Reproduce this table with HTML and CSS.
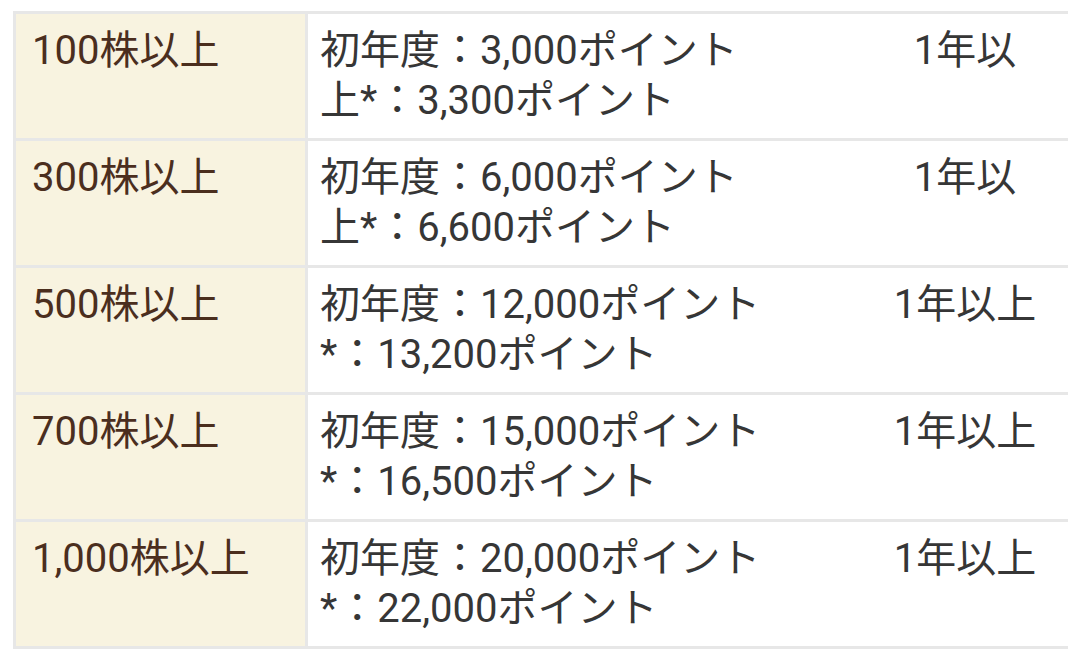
FILE: index.html
```html
<!DOCTYPE html>
<html lang="ja">
<head>
<meta charset="utf-8">
<link rel="stylesheet" href="styles.css">
</head>
<body>
<div class="wrap">
<table class="tbl">
  <tr>
    <th class="c1">100株以上</th>
    <td class="c2">初年度：3,000ポイント<br>上*：3,300ポイント</td>
    <td class="c3">1年以</td>
  </tr>
  <tr>
    <th class="c1">300株以上</th>
    <td class="c2">初年度：6,000ポイント<br>上*：6,600ポイント</td>
    <td class="c3">1年以</td>
  </tr>
  <tr>
    <th class="c1">500株以上</th>
    <td class="c2">初年度：12,000ポイント<br>*：13,200ポイント</td>
    <td class="c3">1年以上</td>
  </tr>
  <tr>
    <th class="c1">700株以上</th>
    <td class="c2">初年度：15,000ポイント<br>*：16,500ポイント</td>
    <td class="c3">1年以上</td>
  </tr>
  <tr>
    <th class="c1">1,000株以上</th>
    <td class="c2">初年度：20,000ポイント<br>*：22,000ポイント</td>
    <td class="c3">1年以上</td>
  </tr>
</table>
</div>
</body>
</html>
```
FILE: styles.css
```css
html, body {
  margin: 0;
  padding: 0;
  background: #ffffff;
}
.wrap {
  padding: 11px 0 0 13px;
}
.tbl {
  border-collapse: collapse;
  width: 1055px;
  table-layout: fixed;
  font-family: Roboto, "Noto Sans CJK JP", sans-serif;
  font-size: 40px;
  line-height: 50px;
}
.tbl tr {
  border-top: 3px solid #e7e7e7;
  border-bottom: 3px solid #e7e7e7;
}
.c1 {
  width: 259px;
  background: #f8f3e0;
  color: #4b2e1e;
  font-weight: normal;
  text-align: left;
  vertical-align: top;
  padding: 12px 14px 12px 16px;
  border-left: 3px solid #e7e7e7;
  border-right: 3px solid #e7e7e7;
  white-space: nowrap;
}
.c2 {
  width: 528px;
  color: #363636;
  vertical-align: top;
  padding: 12px 14px 12px 12px;
  white-space: nowrap;
}
.c3 {
  color: #363636;
  vertical-align: top;
  text-align: center;
  padding: 12px 14px 12px 14px;
  white-space: nowrap;
}
```
